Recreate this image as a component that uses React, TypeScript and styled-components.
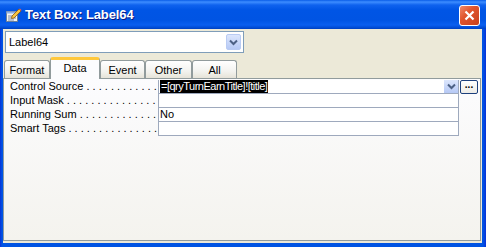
import styled, { createGlobalStyle } from 'styled-components';

const GlobalStyle = createGlobalStyle`
  html, body {
    margin: 0;
    padding: 0;
    background: #ffffff;
  }
  body {
    font-family: 'Liberation Sans', Arial, sans-serif;
    font-size: 11px;
  }
`;

const tabs = [
  { label: 'Format', width: 46 },
  { label: 'Data', width: 50 },
  { label: 'Event', width: 45 },
  { label: 'Other', width: 47 },
  { label: 'All', width: 45 },
];

const activeTab = 'Data';

type RowType = {
  name: string;
  value?: string;
  selected?: boolean;
};

const rows: RowType[] = [
  { name: 'Control Source', value: '=[qryTurnEarnTitle]![title]', selected: true },
  { name: 'Input Mask' },
  { name: 'Running Sum', value: 'No' },
  { name: 'Smart Tags' },
];

const SheetIcon = () => (
  <svg width="17" height="16" viewBox="0 0 17 16">
    <rect x="1.5" y="4.5" width="11" height="10" fill="#f4f4f0" stroke="#6b7f99" />
    <rect x="1.5" y="4.5" width="11" height="2" fill="#8fb1e8" />
    <line x1="3" y1="9" x2="11" y2="9" stroke="#7a8aa8" />
    <line x1="3" y1="11" x2="11" y2="11" stroke="#7a8aa8" />
    <line x1="3" y1="13" x2="9" y2="13" stroke="#7a8aa8" />
    <path d="M7 9 L14 2 L16 4 L9 11 L6.5 11.5 Z" fill="#f5c542" stroke="#8a5a10" strokeWidth="0.8" />
    <path d="M14 2 L16 4 L16.5 3 L15 1.5 Z" fill="#e06060" />
  </svg>
);

const Chevron = ({ color }: { color: string }) => (
  <svg width="9" height="7" viewBox="0 0 9 7">
    <path d="M1 1.5 L4.5 5 L8 1.5" fill="none" stroke={color} strokeWidth="2" />
  </svg>
);

const App = () => {
  return (
    <>
      <GlobalStyle />
      <Window>
        <TitleBar>
          <TitleLeft>
            <SheetIcon />
            <TitleText>Text Box: Label64</TitleText>
          </TitleLeft>
          <CloseButton>
            <svg width="11" height="11" viewBox="0 0 11 11">
              <path d="M1.5 1.5 L9.5 9.5 M9.5 1.5 L1.5 9.5" stroke="#fff" strokeWidth="2.2" />
            </svg>
          </CloseButton>
        </TitleBar>
        <Body>
          <Combo>
            <ComboText>Label64</ComboText>
            <ComboButton>
              <Chevron color="#4d6185" />
            </ComboButton>
          </Combo>
          <TabStrip>
            {tabs.map((t) => (
              <Tab key={t.label} $active={t.label === activeTab} $width={t.width}>
                {t.label}
              </Tab>
            ))}
          </TabStrip>
          <Pane>
            <Grid>
              {rows.map((r) => (
                <Row key={r.name}>
                  <Label>{r.name}</Label>
                  <Value>
                    {r.selected ? <Highlight>{r.value}</Highlight> : <span>{r.value}</span>}
                    {r.selected && (
                      <CellDrop>
                        <Chevron color="#4d6185" />
                      </CellDrop>
                    )}
                  </Value>
                  <Extra>{r.selected && <BuildButton>...</BuildButton>}</Extra>
                </Row>
              ))}
            </Grid>
          </Pane>
        </Body>
      </Window>
    </>
  );
};

export default App;

const Window = styled.div`
  width: 486px;
  height: 247px;
  display: flex;
  flex-direction: column;
  background: linear-gradient(to right, #0831d9 0px, #0054e3 2px, #0054e3 483px, #0831d9 486px);
  box-sizing: border-box;
`;

const TitleBar = styled.div`
  height: 29px;
  flex-shrink: 0;
  display: flex;
  align-items: center;
  justify-content: space-between;
  padding: 0 6px 0 5px;
  background: linear-gradient(
    to bottom,
    #0a5de8 0px,
    #3d8dff 2px,
    #0f62ee 5px,
    #0055e5 10px,
    #0054e3 20px,
    #0a5ff0 25px,
    #0049d0 28px,
    #0040c0 29px
  );
`;

const TitleLeft = styled.div`
  display: flex;
  align-items: center;
  gap: 3px;
`;

const TitleText = styled.span`
  font-family: 'Liberation Sans', Arial, sans-serif;
  font-weight: bold;
  font-size: 13px;
  color: #ffffff;
  text-shadow: 1px 1px 0 #0a1883;
  letter-spacing: -0.1px;
`;

const CloseButton = styled.div`
  width: 19px;
  height: 19px;
  display: flex;
  align-items: center;
  justify-content: center;
  border: 1px solid #ffffff;
  border-radius: 3px;
  background: linear-gradient(135deg, #f0896a 0%, #e0542c 40%, #c8401c 100%);
  margin-top: 1px;
`;

const Body = styled.div`
  flex: 1;
  margin: 0 4px 4px 3px;
  background: #ece9d8;
  display: flex;
  flex-direction: column;
  padding: 2px 0 0 0;
`;

const Combo = styled.div`
  width: 232px;
  height: 20px;
  margin-left: 2px;
  border: 1px solid #7f9db9;
  background: #ffffff;
  display: flex;
  align-items: center;
  justify-content: space-between;
  padding: 0 2px 0 3px;
`;

const ComboText = styled.span`
  color: #000000;
`;

const ComboButton = styled.div`
  width: 15px;
  height: 16px;
  display: flex;
  align-items: center;
  justify-content: center;
  border-radius: 2px;
  background: linear-gradient(to bottom, #dce6fc, #b6c9f5);
  border: 1px solid #b9cbf3;
  box-sizing: border-box;
`;

const TabStrip = styled.div`
  height: 21px;
  margin-top: 4px;
  padding-left: 1px;
  display: flex;
  align-items: flex-end;
`;

const Tab = styled.div<{ $active: boolean; $width: number }>`
  box-sizing: border-box;
  width: ${(p) => p.$width}px;
  height: ${(p) => (p.$active ? 22 : 18)}px;
  display: flex;
  justify-content: center;
  align-items: ${(p) => (p.$active ? 'flex-start' : 'center')};
  padding-top: ${(p) => (p.$active ? 2 : 1)}px;
  color: #000000;
  border: 1px solid #919b9c;
  border-bottom: none;
  border-radius: 3px 3px 0 0;
  position: relative;
  z-index: ${(p) => (p.$active ? 2 : 1)};
  margin-bottom: ${(p) => (p.$active ? -1 : 0)}px;
  background: ${(p) =>
    p.$active ? '#fcfcfe' : 'linear-gradient(to bottom, #ffffff 0%, #f3f3ef 60%, #e6e3d8 100%)'};
  border-top: ${(p) => (p.$active ? '3px solid #ffc83c' : '1px solid #919b9c')};
`;

const Pane = styled.div`
  flex: 1;
  margin: 0 1px 2px 0;
  border: 1px solid #919b9c;
  background: linear-gradient(to bottom, #fcfcfe 0%, #f4f3ee 100%);
`;

const Grid = styled.div`
  display: flex;
  flex-direction: column;
  padding-top: 1px;
`;

const Row = styled.div`
  display: grid;
  grid-template-columns: 154px 301px 20px;
  height: 14px;
`;

const Label = styled.div`
  padding-left: 6px;
  white-space: nowrap;
  overflow: hidden;
  line-height: 13px;
  color: #000000;

  &::after {
    content: ' . . . . . . . . . . . . . . . . . . . . . . . . . . . . . .';
  }
`;

const Value = styled.div`
  box-sizing: border-box;
  background: #ffffff;
  border-left: 1px solid #9ea9bd;
  border-right: 1px solid #9ea9bd;
  border-bottom: 1px solid #9ea9bd;
  display: flex;
  align-items: center;
  justify-content: space-between;
  padding-left: 1px;
  line-height: 13px;
  white-space: nowrap;
`;

const Highlight = styled.span`
  background: #000000;
  color: #ffffff;
  padding: 0 1px;
  letter-spacing: -0.5px;
`;

const CellDrop = styled.div`
  width: 14px;
  height: 13px;
  display: flex;
  align-items: center;
  justify-content: center;
  background: linear-gradient(to bottom, #dce6fc, #b6c9f5);
`;

const Extra = styled.div`
  display: flex;
  align-items: flex-start;
  padding-left: 1px;
`;

const BuildButton = styled.div`
  box-sizing: border-box;
  width: 18px;
  height: 14px;
  border: 1px solid #1c3f7c;
  border-radius: 2px;
  background: linear-gradient(to bottom, #ffffff, #ecebe6);
  font-size: 10px;
  font-weight: bold;
  line-height: 8px;
  text-align: center;
  color: #000000;
`;
